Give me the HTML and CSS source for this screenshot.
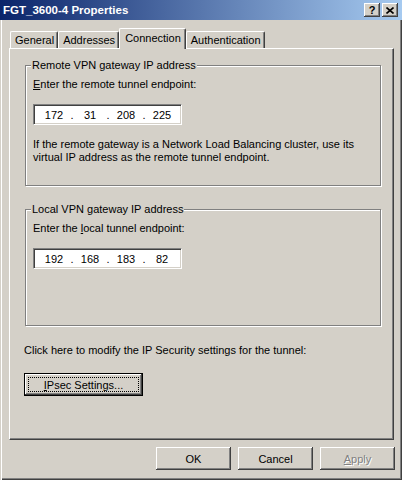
FILE: index.html
```html
<!DOCTYPE html>
<html lang="en">
<head>
  <meta charset="UTF-8"/>
  <meta name="viewport" content="width=device-width,initial-scale=1.0"/>
  <title>FGT_3600-4 Properties</title>
  <link rel="stylesheet" href="styles.css">
</head>
<body>
  <div class="window">
    <div class="titlebar">
      <span class="title">FGT_3600-4 Properties</span>
      <div class="caption-btns">
        <button class="cap-btn cap-help">?</button>
        <button class="cap-btn cap-close"><svg viewBox="0 0 8 7" width="8" height="7"><path d="M0.5 0.5L7.5 6.5M7.5 0.5L0.5 6.5" stroke="#000" stroke-width="1.6" fill="none"/></svg></button>
      </div>
    </div>

    <div class="client">
      <div class="tabs">
        <div class="tab">General</div>
        <div class="tab">Addresses</div>
        <div class="tab active">Connection</div>
        <div class="tab">Authentication</div>
      </div>

      <div class="panel">
        <fieldset class="group group-remote">
          <legend>Remote VPN gateway IP address</legend>
          <label class="prompt"><u>E</u>nter the remote tunnel endpoint:</label>
          <div class="ip-field">
            <span class="oct">172</span><span class="dot">.</span><span class="oct">31</span><span class="dot">.</span><span class="oct">208</span><span class="dot">.</span><span class="oct">225</span>
          </div>
          <p class="note">If the remote gateway is a Network Load Balancing cluster, use its<br>virtual IP address as the remote tunnel endpoint.</p>
        </fieldset>

        <fieldset class="group group-local">
          <legend>Local VPN gateway IP address</legend>
          <label class="prompt">Enter the <u>l</u>ocal tunnel endpoint:</label>
          <div class="ip-field">
            <span class="oct">192</span><span class="dot">.</span><span class="oct">168</span><span class="dot">.</span><span class="oct">183</span><span class="dot">.</span><span class="oct">82</span>
          </div>
        </fieldset>

        <div class="tunnel-settings">
          <p class="hint">Click here to modify the IP Security settings for the tunnel:</p>
          <button class="btn btn-default"><span class="focus-rect"><u>I</u>Psec Settings...</span></button>
        </div>
      </div>

      <div class="actions">
        <button class="btn">OK</button>
        <button class="btn">Cancel</button>
        <button class="btn" disabled><u>A</u>pply</button>
      </div>
    </div>
  </div>
</body>
</html>
```

FILE: styles.css
```css
/* ===== Global ===== */
* { margin:0; padding:0; box-sizing:border-box; }
body { font-family:'Liberation Sans',Arial,sans-serif; font-size:11px; color:#000; background:#d4d0c8; }
u { text-decoration:underline; text-underline-offset:1px; }

/* ===== Window frame ===== */
.window {
  width:402px; height:480px; display:flex; flex-direction:column; overflow:hidden;
  background:#d4d0c8;
  box-shadow:inset 1px 0 #d4d0c8, inset 2px 0 #fff, inset -1px -1px #404040, inset -2px -2px #808080;
}
.titlebar {
  height:20px; display:flex; align-items:center; justify-content:space-between;
  padding:0 4px 0 3px;
  background:linear-gradient(to right,#0a246a,#a6caf0);
}
.title { color:#fff; font-weight:bold; font-size:11.5px; }
.caption-btns { display:flex; gap:2px; }
.cap-btn {
  width:16px; height:14px; display:flex; align-items:center; justify-content:center;
  border:none; background:#d4d0c8; font:bold 11px 'Liberation Sans',Arial,sans-serif; color:#000;
  box-shadow:inset -1px -1px #404040, inset 1px 1px #fff, inset -2px -2px #808080;
}
.cap-btn svg { display:block; }

/* ===== Tabs ===== */
.client { flex:1; display:flex; flex-direction:column; padding:8px 7px 0 9px; }
.tabs { display:flex; align-items:flex-end; height:20px; padding-left:1px; }
.tab {
  height:17px; line-height:16px; padding:0 3px 0 4px; white-space:nowrap;
  border-top:1px solid #fff; border-left:1px solid #fff; border-right:1px solid #404040;
  border-radius:2px 2px 0 0; box-shadow:inset -1px 0 #808080;
}
.tab.active {
  height:21px; margin-bottom:-1px; padding:1px 4px 0 5px;
  position:relative; z-index:1; background:#d4d0c8;
}
.panel {
  height:392px; margin-right:1px; padding:10px 12px 0 15px;
  border:1px solid; border-color:#fff #404040 #404040 #fff;
  box-shadow:inset -1px -1px #808080;
}

/* ===== Group boxes ===== */
.group {
  border:1px solid #808080; padding:0 7px;
  box-shadow:1px 1px 0 #fff, inset 1px 1px 0 #fff;
}
.group legend { margin-left:-2px; padding:0 1px; line-height:13px; background:#d4d0c8; }
.group-remote { height:127px; }
.group-local { height:123px; margin-top:17px; }
.prompt { display:block; line-height:13px; margin-top:6px; }
.ip-field {
  width:149px; height:21px; margin-top:13px; padding-left:5px;
  display:flex; align-items:center; background:#fff;
  border:1px solid; border-color:#808080 #fff #fff #808080;
  box-shadow:inset 1px 1px #404040, inset -1px -1px #d4d0c8;
}
.oct { width:30px; text-align:center; }
.dot { width:6px; text-align:center; }
.note { margin-top:13px; line-height:13px; }

.tunnel-settings { margin:18px 0 0 -1px; }
.hint { line-height:13px; }

/* ===== Buttons ===== */
.btn {
  width:75px; height:23px; font:inherit; color:#000; background:#d4d0c8; border:none;
  box-shadow:inset -1px -1px #404040, inset 1px 1px #fff, inset -2px -2px #808080;
}
.btn:disabled { color:#808080; text-shadow:1px 1px 0 #fff; }
.btn-default { width:119px; margin-top:16px; padding:3px; border:1px solid #000; }
.focus-rect {
  display:flex; height:100%; align-items:center; justify-content:center;
  border:1px dotted #000;
}
.actions { display:flex; justify-content:flex-end; gap:7px; margin-top:7px; }
```
